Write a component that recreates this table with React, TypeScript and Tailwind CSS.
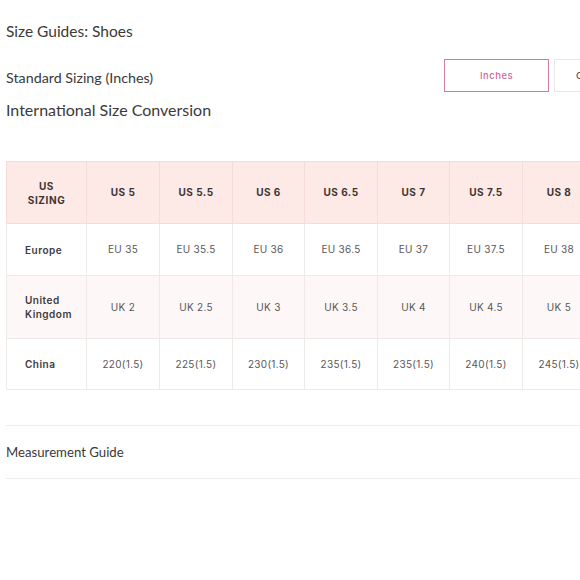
import React from 'react';

const sizes = ['US 5', 'US 5.5', 'US 6', 'US 6.5', 'US 7', 'US 7.5', 'US 8', 'US 8.5'];

const rows = [
  {
    label: 'Europe',
    values: ['EU 35', 'EU 35.5', 'EU 36', 'EU 36.5', 'EU 37', 'EU 37.5', 'EU 38', 'EU 38.5'],
    tint: false,
    h: 'h-[52px]',
  },
  {
    label: 'United Kingdom',
    values: ['UK 2', 'UK 2.5', 'UK 3', 'UK 3.5', 'UK 4', 'UK 4.5', 'UK 5', 'UK 5.5'],
    tint: true,
    h: 'h-[63px]',
  },
  {
    label: 'China',
    values: ['220(1.5)', '225(1.5)', '230(1.5)', '235(1.5)', '235(1.5)', '240(1.5)', '245(1.5)', '250(1.5)'],
    tint: false,
    h: 'h-[51px]',
  },
];

const colWidths = ['w-[73px]', 'w-[73px]', 'w-[72px]', 'w-[73px]', 'w-[72px]', 'w-[73px]', 'w-[73px]', 'w-[73px]'];

export default function App() {
  return (
    <div className="w-[580px] h-[580px] overflow-hidden bg-white text-[#3b3b3b]">
      <div className="w-[760px] pl-[6px]">
        <h1 className="pt-[21px] text-[15.5px] leading-[20px] font-['Lato',sans-serif] text-[#3a3a3a]">
          Size Guides: Shoes
        </h1>

        <div className="flex items-center w-[653px] mt-[18px]">
          <h2 className="flex-1 text-[14.3px] leading-[18px] pt-[4px] font-['Lato',sans-serif] text-[#3a3a3a]">
            Standard Sizing (Inches)
          </h2>
          <div className="flex gap-[5px]">
            <button className="w-[105px] h-[33px] pt-[2px] border border-[#cf7ba3] text-[9.5px] tracking-[0.5px] font-medium text-[#cf6a9c] font-['Inter',sans-serif]">
              Inches
            </button>
            <button className="w-[105px] h-[33px] pt-[2px] border border-[#ebe7e6] text-[9.5px] tracking-[0.5px] font-medium text-[#555] font-['Inter',sans-serif]">
              Centimeters
            </button>
          </div>
        </div>

        <h2 className="mt-[8px] text-[16px] leading-[20px] font-['Lato',sans-serif] text-[#3a3a3a]">
          International Size Conversion
        </h2>

        <table className="mt-[41px] table-fixed border-collapse font-['Inter',sans-serif] text-[10px]">
          <colgroup>
            <col className="w-[80px]" />
            {colWidths.map((w, i) => (
              <col key={i} className={w} />
            ))}
          </colgroup>
          <thead>
            <tr className="h-[62px] bg-[#fde9e5]">
              <th className="border border-[#f5dcd7] font-bold leading-[14px] tracking-[0.6px] text-[#3d3535] text-center">
                US
                <br />
                SIZING
              </th>
              {sizes.map((s) => (
                <th key={s} className="border border-[#f5dcd7] font-bold tracking-[0.5px] text-[#3d3535] text-center">
                  {s}
                </th>
              ))}
            </tr>
          </thead>
          <tbody>
            {rows.map((r) => (
              <tr key={r.label} className={`${r.h} ${r.tint ? 'bg-[#fdf8f7]' : 'bg-white'}`}>
                <td className="border border-[#eeeae7] pl-[18px] pr-2 font-semibold leading-[14px] tracking-[0.5px] text-[#3d3a3a]">
                  {r.label}
                </td>
                {r.values.map((v, i) => (
                  <td key={i} className="border border-[#eeeae7] text-center tracking-[0.3px] text-[#5a5757]">
                    {v}
                  </td>
                ))}
              </tr>
            ))}
          </tbody>
        </table>

        <div className="mt-[35px] border-t border-[#ececec]">
          <div className="h-[52px] flex items-center pt-[1px] text-[13.2px] font-['Lato',sans-serif] text-[#3a3a3a]">
            Measurement Guide
          </div>
        </div>
        <div className="border-t border-[#ececec]" />
      </div>
    </div>
  );
}
